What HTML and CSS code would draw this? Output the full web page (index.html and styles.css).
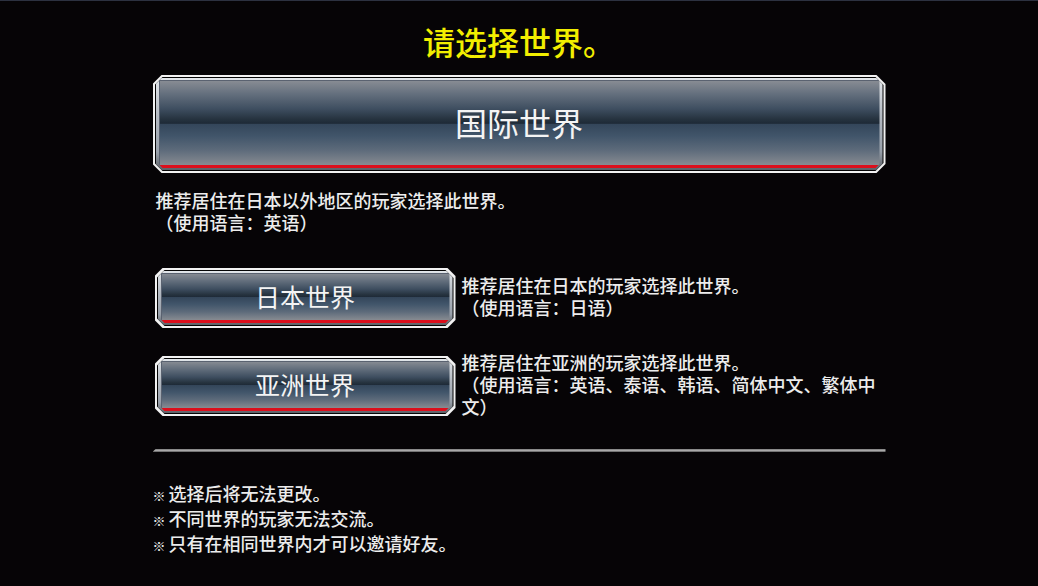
FILE: index.html
```html
<!DOCTYPE html>
<html lang="zh-CN">
<head>
<meta charset="utf-8">
<title>请选择世界</title>
<link rel="stylesheet" href="styles.css">
</head>
<body>
<div class="page">
  <h1 class="title">请选择世界。</h1>

  <div class="wbtn wbtn-big">
    <div class="wbtn-gap">
      <div class="wbtn-frame">
        <div class="wbtn-face">国际世界</div>
      </div>
    </div>
  </div>
  <p class="desc desc-main">推荐居住在日本以外地区的玩家选择此世界。<br>（使用语言：英语）</p>

  <div class="row row-jp">
    <div class="wbtn wbtn-small">
      <div class="wbtn-gap">
        <div class="wbtn-frame">
          <div class="wbtn-face">日本世界</div>
        </div>
      </div>
    </div>
    <p class="desc desc-side">推荐居住在日本的玩家选择此世界。<br>（使用语言：日语）</p>
  </div>

  <div class="row row-asia">
    <div class="wbtn wbtn-small">
      <div class="wbtn-gap">
        <div class="wbtn-frame">
          <div class="wbtn-face">亚洲世界</div>
        </div>
      </div>
    </div>
    <p class="desc desc-side">推荐居住在亚洲的玩家选择此世界。<br>（使用语言：英语、泰语、韩语、简体中文、繁体中文）</p>
  </div>

  <div class="divider"></div>

  <ul class="notes">
    <li><span class="mark">※</span>选择后将无法更改。</li>
    <li><span class="mark">※</span>不同世界的玩家无法交流。</li>
    <li><span class="mark">※</span>只有在相同世界内才可以邀请好友。</li>
  </ul>
</div>
</body>
</html>
```

FILE: styles.css
```css
html, body {
  margin: 0;
  padding: 0;
}
body {
  background: #060406;
  border-top: 1px solid #2c3140;
  height: 585px;
  overflow: hidden;
  font-family: "Noto Sans CJK SC", "Noto Sans CJK JP", sans-serif;
  font-weight: 500;
  color: #ececec;
  text-spacing-trim: space-all;
  font-feature-settings: "fwid" 1;
}
.page {
  width: 733px;
  margin: 0 auto;
  display: flex;
  flex-direction: column;
}
.title {
  margin: 22px 0 0 0;
  font-size: 32px;
  line-height: 36px;
  font-weight: 500;
  color: #f2ee00;
  text-align: center;
}

/* chamfered world button */
.wbtn {
  --c: 9px;
  background: #f2f2f2;
  padding: 2px;
  clip-path: polygon(var(--c) 0, calc(100% - var(--c)) 0, 100% var(--c), 100% calc(100% - var(--c)), calc(100% - var(--c)) 100%, var(--c) 100%, 0 calc(100% - var(--c)), 0 var(--c));
  box-sizing: border-box;
}
.wbtn-gap {
  --c: 8px;
  background: #050505;
  padding: 1px;
  height: 100%;
  box-sizing: border-box;
  clip-path: polygon(var(--c) 0, calc(100% - var(--c)) 0, 100% var(--c), 100% calc(100% - var(--c)), calc(100% - var(--c)) 100%, var(--c) 100%, 0 calc(100% - var(--c)), 0 var(--c));
}
.wbtn-frame {
  --c: 6px;
  background: linear-gradient(to bottom, #e2e6ea 0%, #b4bac2 40%, #98a0aa 80%, #5c6066 100%);
  padding: 2px 3px 2px 3px;
  height: 100%;
  box-sizing: border-box;
  clip-path: polygon(var(--c) 0, calc(100% - var(--c)) 0, 100% var(--c), 100% calc(100% - var(--c)), calc(100% - var(--c)) 100%, var(--c) 100%, 0 calc(100% - var(--c)), 0 var(--c));
}
.wbtn-face {
  --c: 4px;
  height: 100%;
  box-sizing: border-box;
  display: flex;
  align-items: center;
  justify-content: center;
  color: #f4f4f4;
  font-weight: 400;
  border-bottom: 3px solid #dc0f1c;
  background: linear-gradient(to bottom, #8a8e95 0%, #65707e 16%, #3e4e60 34%, #26333f 46%, #1e2a37 51%, #34465a 52%, #41556a 66%, #5c6a7a 82%, #878b91 100%);
  box-shadow: inset 1px 1px 0 #5a6270;
  clip-path: polygon(0 0, 100% 0, 100% calc(100% - var(--c)), calc(100% - var(--c)) 100%, var(--c) 100%, 0 calc(100% - var(--c)));
}
.wbtn-big {
  margin-top: 16px;
  width: 733px;
  height: 98px;
}
.wbtn-big .wbtn-face {
  font-size: 32px;
  padding-bottom: 2px;
}
.wbtn-small {
  --c: 8px;
  width: 301px;
  height: 60px;
  margin-left: 2px;
  flex: none;
}
.wbtn-small .wbtn-face {
  font-size: 25px;
  padding-bottom: 1px;
}

.desc {
  margin: 0;
  font-size: 18px;
  line-height: 22px;
}
.desc-main {
  margin-top: 16px;
  padding-left: 3px;
}
.row {
  display: flex;
  align-items: center;
}
.row-jp {
  margin-top: 35px;
}
.row-asia {
  margin-top: 23px;
}
.desc-side {
  margin-left: 6px;
  width: 424px;
  padding-bottom: 4px;
}
.divider {
  margin-top: 28px;
  height: 3px;
  background: linear-gradient(to bottom, #7a7a7a, #a8a8a8, #5a5a5a);
  clip-path: polygon(3px 0, 100% 0, 100% 100%, 0 100%);
}
.notes {
  list-style: none;
  margin: 30px 0 0 0;
  padding: 0;
  font-size: 18px;
  line-height: 22px;
}
.mark {
  display: inline-block;
  width: 16px;
  font-size: 13px;
}
```
